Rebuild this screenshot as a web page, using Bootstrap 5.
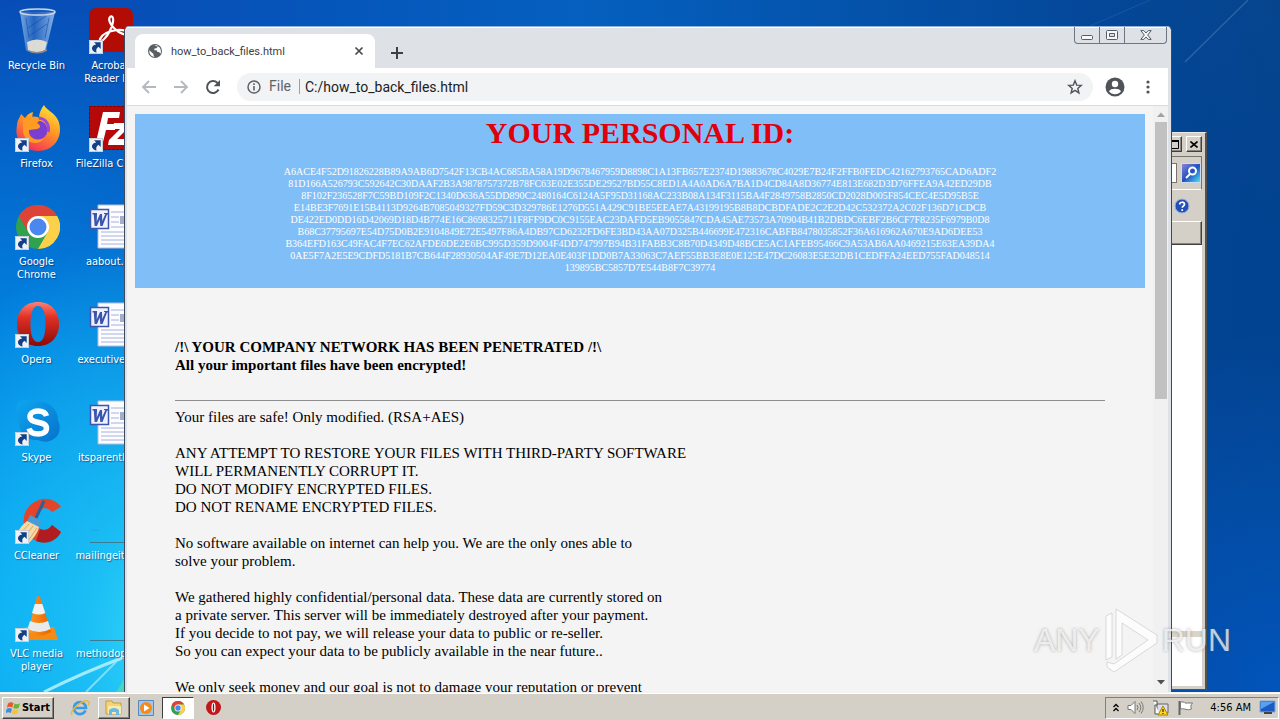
<!DOCTYPE html>
<html lang="en">
<head>
<meta charset="utf-8">
<meta name="viewport" content="width=device-width, initial-scale=1">
<title>how_to_back_files.html</title>
<link href="https://cdn.jsdelivr.net/npm/bootstrap@5.3.0/dist/css/bootstrap.min.css" rel="stylesheet">
<style>
  :root { --face: #d4d0c8; --ui: "DejaVu Sans Condensed", "Noto Sans", sans-serif; --tab: Roboto, "Noto Sans", sans-serif; }
  body { font-family: var(--ui); font-size: 11px; line-height: 13px; color: #000; }
  button { font-family: inherit; padding: 0; border: 0; background: none; color: inherit; }
  svg { display: block; flex: none; }
  .desktop {
    background:
      radial-gradient(ellipse 320px 420px at 190px 640px, #38dcfa 0%, rgba(30,196,246,.85) 35%, rgba(0,150,236,0) 100%),
      radial-gradient(ellipse 420px 640px at 0 620px, #00a4f4 0%, rgba(0,140,232,.85) 45%, rgba(0,90,200,0) 100%),
      radial-gradient(ellipse 300px 360px at 100% 100%, rgba(0,86,192,.9), rgba(0,80,180,0)),
      radial-gradient(ellipse 300px 420px at 100% 42%, rgba(0,66,146,.9), rgba(0,70,160,0)),
      linear-gradient(90deg, #0749b4 0%, #0560bf 45%, #04489a 85%, #08468c 100%);
    background-color: #0450ae;
  }
  .rays { inset: 0; width: 100%; height: 100%; }
  .icon-grid { display: grid; grid-template-columns: 73px 75px; grid-auto-rows: 98px; width: 148px; }
  .shortcut { color: #fff; text-decoration: none; padding-top: 6px; text-shadow: 1px 1px 1px rgba(0,30,90,.55); }
  .shortcut svg { margin-bottom: 5px; }
  /* windows */
  .explorer { top: 132px; right: 73px; bottom: 2px; width: 35%; background: var(--face); border: 1px solid #eceae6; border-right: 2px solid #55524c; border-bottom: 1px solid #55524c; padding: 3px 3px 3px 3px; }
  .cap { width: 16px; height: 16px; background: var(--face); }
  .raised { background: var(--face); border: 1px solid #fff; border-right-color: #404040; border-bottom-color: #404040; box-shadow: inset -1px -1px #88857e; }
  .sunken { border: 1px solid #808080; border-right-color: #fff; border-bottom-color: #fff; }
  .find-row { height: 34px; border: 1px solid #fff; border-right-color: #77746e; border-top-color: #77746e; }
  .find-row input { height: 20px; border: 1px solid #77746e; background: #fff; }
  .find-row button { width: 20px; height: 20px; background: linear-gradient(135deg,#8b86d8,#1f50c0 50%,#4fe0f4); border: 1px solid #cde; }
  .help-row { height: 31px; }
  .head-row { height: 24px; }
  .split-row { height: 6px; background: #d8d5c8; margin-bottom: 49px; }
  .browser { top: 26px; left: 124px; right: 108px; bottom: 0; background: #dee1e6; border: 1px solid #3b4a5e; border-top-color: #8fb0d8; border-bottom: 0; border-radius: 5px 5px 0 0; padding: 0 3px 0 2px; box-shadow: inset 0 1px #fff; }
  .tabbar { flex: none; height: 41px; padding: 7px 0 0 8px; }
  .tab { width: 240px; height: 34px; background: #fff; border-radius: 8px 8px 0 0; padding: 0 11px 0 12px; font-family: var(--tab); font-size: 11px; color: #3c4043; }
  .new-tab { margin: 3px 0 0 15px; }
  .winctl { top: 0; right: 4px; height: 17px; border: 1px solid #6d7583; border-top: 0; border-radius: 0 0 4px 4px; }
  .winctl button { width: 25px; border-right: 1px solid #6d7583; }
  .winctl button:last-child { width: 41px; border: 0; }
  .toolbar { flex: none; height: 38px; background: #fff; border-bottom: 1px solid #dadada; padding: 0 13px 0 14px; }
  .omnibox { height: 28px; background: #f1f3f4; border-radius: 14px; padding: 0 10px; font-family: var(--tab); font-size: 14px; color: #5f6368; }
  .omnibox input { border: 0; background: none; outline: 0; color: #202124; font-size: 14px; padding: 0; }
  .divider { width: 1px; height: 15px; background: #9aa0a6; margin: 0 5px 0 8px; }
  .viewport { min-height: 0; }
  .note { background: #f4f4f4; padding: 8px; font-family: "Liberation Serif", serif; font-size: 15px; line-height: 18px; overflow: hidden; }
  .idbox { background: #80bef8; color: #fff; padding-bottom: 14px; font-size: 10px; line-height: 12px; }
  .idbox h1 { font-size: 30px; line-height: 37px; font-weight: 700; color: #e0000c; margin-bottom: 15px; }
  .message { padding: 50px 40px 0; }
  .message hr { margin: 26px 0 7px; border-top: 1px solid #8e8e8e; opacity: 1; }
  .message p { margin: 0 0 18px; }
  .scroller { width: 15px; background: #f1f1f1; padding: 6px 1px 3px 2px; }
  .thumb { background: #c1c1c1; height: 48%; width: 12px; margin-top: 5px; }
  /* watermark */
  .mark-any { right: 49px; bottom: 18px; height: 68px; font-family: "Liberation Sans", sans-serif; font-size: 32px; line-height: 36px; color: rgba(255,255,255,.72); text-shadow: 0 0 3px rgba(90,90,90,.5); pointer-events: none; }
  /* taskbar */
  .taskbar { flex: none; height: 28px; background: var(--face); border-top: 1px solid #f3f2ef; padding: 3px 1px 1px 2px; box-shadow: inset 0 1px #fff; }
  .start { width: 52px; height: 22px; font-weight: 700; font-size: 11px; }
  .task { width: 32px; height: 22px; }
  .task.active { background: #fff; border: 1px solid #404040; border-right-color: #fff; border-bottom-color: #fff; }
  .tray { height: 22px; padding: 0 1px 0 7px; }
</style>
</head>
<body class="vh-100 d-flex flex-column overflow-hidden">

<svg width="0" height="0" class="position-absolute" aria-hidden="true">
  <defs>
    <linearGradient id="gOpera" x1="0" y1="0" x2="0" y2="1"><stop offset="0" stop-color="#ff8070"/><stop offset=".35" stop-color="#e03024"/><stop offset="1" stop-color="#8c0a08"/></linearGradient>
    <linearGradient id="gFox" x1=".8" y1="0" x2=".3" y2="1"><stop offset="0" stop-color="#ffe63c"/><stop offset=".45" stop-color="#ff9a24"/><stop offset="1" stop-color="#f42c58"/></linearGradient>
    <linearGradient id="gSkype" x1="0" y1="0" x2="1" y2="1"><stop offset="0" stop-color="#0da7f0"/><stop offset="1" stop-color="#0672cc"/></linearGradient>
    <linearGradient id="gBin" x1="0" x2="1"><stop offset="0" stop-color="#9cc4ee" stop-opacity=".75"/><stop offset=".4" stop-color="#2f6cc4" stop-opacity=".7"/><stop offset="1" stop-color="#a8ccf0" stop-opacity=".8"/></linearGradient>
    <linearGradient id="gCone" x1="0" x2="1"><stop offset="0" stop-color="#ff9820"/><stop offset="1" stop-color="#e86400"/></linearGradient>
    <symbol id="link" viewBox="0 0 14 14"><path d="M0 0h14v14H0z" fill="#eef1f5"/><path d="M.5.5h13v13H.5z" fill="none" stroke="#c9cdd4"/><path d="M5 2.300h6.700V9L9.500 6.800C7.200 8.300 6.800 10 7.600 12.500 4 11.800 2.200 9.200 3.300 7 4 5.500 5.500 4.900 7.300 4.600z" fill="#123f86"/></symbol>
    <symbol id="chrome" viewBox="0 0 44 44">
      <circle cx="22" cy="22" r="22" fill="#2fa14f"/>
      <path d="M2.900 11A22 22 0 0 1 41.100 11H22l-9.500 16.500z" fill="#dc4437"/>
      <path d="M41.100 11A22 22 0 0 1 22 44l9.500-16.500L22 11z" fill="#fdd04a"/>
      <circle cx="22" cy="22" r="11" fill="#fff"/><circle cx="22" cy="22" r="8.500" fill="#4a87ee"/>
    </symbol>
    <symbol id="opera" viewBox="0 0 44 46"><path fill-rule="evenodd" d="M22 1C9 1 1 10 1 23s8 22 21 22 21-9 21-22S35 1 22 1zm0 4c5.500 0 7.500 8 7.500 18S27.500 41 22 41s-7.500-8-7.500-18S16.500 5 22 5z" fill="url(#gOpera)"/></symbol>
    <symbol id="word" viewBox="0 0 48 48">
      <path d="M11 3h37v43H11z" fill="#fdfdff" stroke="#b4bbe0"/>
      <path d="M24 10h22M24 15h8M24 20h8M24 25h22M14 30h32M14 34h32M14 38h32M14 42h32" stroke="#a4b0dc"/><path d="M33 14h13v8H33z" fill="#a4aecb"/>
      <path d="M3.500 7.500h18v19h-18z" fill="#eef2ff" stroke="#3c56ae" stroke-width="1.500"/>
      <path d="M5.500 11h4.500v1.500l-.3 7 3.300-7.500h2l.3 7 3-7h-1.300V11h4v1.500h-1L15.500 24h-2.200l-.6-6.500L10 24H7.600l-.8-11.500H5.500z" fill="#3b54ac"/>
    </symbol>
  </defs>
</svg>

<main class="desktop position-relative flex-grow-1 overflow-hidden">
  <svg class="rays position-absolute" viewBox="0 0 1280 692" preserveAspectRatio="none" aria-hidden="true">
    <path d="M1248 0L1185 62" stroke="#3f78b8" stroke-width="1.500" opacity=".6"/><path d="M1150 0L1090 26" stroke="#2a66b4" opacity=".5"/>
    <path d="M44 692Q84 672 125 657" stroke="#b8f2ff" stroke-width="3" fill="none" opacity=".85"/>
    <path d="M86 692Q106 672 116 662" stroke="#a0ecff" stroke-width="2" fill="none" opacity=".7"/>
    <path d="M116 692Q122 684 125 676V692z" fill="#5be2a0" opacity=".6"/>
  </svg>

  <nav class="icon-grid position-relative text-center" aria-label="Desktop">
    <a href="#" class="shortcut d-flex flex-column align-items-center">
      <svg width="48" height="48" viewBox="0 0 48 48"><path d="M7 6l6 38q11 6 20 0l9-38z" fill="url(#gBin)"/><path d="M14 36q10-5 20 0l-2 8q-9 5-17 0z" fill="#e6e0d6" opacity=".95"/><path d="M13 12l3 20M36 12l-4 20M15 22l18-12M16 30l18-12" stroke="#1546a0" opacity=".55" fill="none"/><ellipse cx="24.500" cy="6" rx="17.500" ry="3" fill="#2a62b8" fill-opacity=".5" stroke="#c8d8ea" stroke-width="1.500"/><path d="M13 43q11 6 21 0v2q-10 5-20 0z" fill="#87898e"/></svg>
      <span>Recycle Bin</span></a>
    <a href="#" class="shortcut d-flex flex-column align-items-center">
      <svg width="48" height="48" viewBox="0 0 48 48"><rect x="2" y="2" width="44" height="44" rx="7" fill="#b30c05"/><path d="M13 33c2-5 9-8 17-9 6-.6 11 1 10 3-1 3-8 0-12-4-5-4-7-10-5-12s4 1 3 5c-1 6-5 13-8 16-2 3-6 4-5 1z" fill="none" stroke="#fff" stroke-width="2.200"/><use href="#link" x="2" y="34" width="14" height="14"/></svg>
      <span>Acrobat<br>Reader DC</span></a>
    <a href="#" class="shortcut d-flex flex-column align-items-center">
      <svg width="48" height="48" viewBox="0 0 48 48"><path d="M31 1c2 5 10 7 14 15 6 14-2 31-20 31C10 47 1 36 4 21c.5-6 3-7 4-11l4 4c2-3 4-5 8-6l-1 6c3-2 5-1 7 0 0-5 2-9 5-13z" fill="url(#gFox)"/><circle cx="25" cy="26" r="9.500" fill="#7a3fd0"/><path d="M10 16c4-4 11-5 18-1l-4 4c4 2 4 5 0 6l-8 1c-1 9 8 12 15 8-7 10-20 4-21-7z" fill="#ff9b22"/><path d="M26 14c7 1 11 7 9 14" stroke="#9a48e0" stroke-width="3" fill="none"/><use href="#link" x="2" y="34" width="14" height="14"/></svg>
      <span>Firefox</span></a>
    <a href="#" class="shortcut d-flex flex-column align-items-center">
      <svg width="48" height="48" viewBox="0 0 48 48"><path d="M2 2h44v44H2z" fill="#b50808"/><path d="M2.500 2.500h43v43h-43z" fill="none" stroke="#700" stroke-dasharray="2 2"/><path d="M16 8h17l-1 6H21l-1 6h9l-1 6h-9l-3 12H9zM27 19h15l-1 5-11 11h10l-1 6H21l1-5 11-11h-7z" fill="#fff"/><use href="#link" x="2" y="34" width="14" height="14"/></svg>
      <span class="text-nowrap">FileZilla Client</span></a>
    <a href="#" class="shortcut d-flex flex-column align-items-center">
      <svg width="48" height="48" viewBox="0 0 48 48"><use href="#chrome" x="3" y="3" width="44" height="44"/><use href="#link" x="2" y="34" width="14" height="14"/></svg>
      <span>Google<br>Chrome</span></a>
    <a href="#" class="shortcut d-flex flex-column align-items-center">
      <svg width="48" height="48"><use href="#word" width="48" height="48"/></svg><span>aabout.rtf</span></a>
    <a href="#" class="shortcut d-flex flex-column align-items-center">
      <svg width="48" height="48" viewBox="0 0 48 48"><use href="#opera" x="3" y="1" width="44" height="46"/><use href="#link" x="2" y="34" width="14" height="14"/></svg>
      <span>Opera</span></a>
    <a href="#" class="shortcut d-flex flex-column align-items-center">
      <svg width="48" height="48"><use href="#word" width="48" height="48"/></svg><span>executivet.rtf</span></a>
    <a href="#" class="shortcut d-flex flex-column align-items-center">
      <svg width="48" height="48" viewBox="0 0 48 48"><path d="M5 5q7-6 16-2c13-1 24 7 24 19 3 7 2 14-3 18-6 5-12 4-17 2C12 43 5 34 6 22 3 16 2 10 5 5z" fill="url(#gSkype)"/><path d="M33.500 18C32.500 14.500 29 13 25 13c-5 0-8 2.500-8 5.500 0 4.500 4.500 5 9 6 4.500 1 7.500 2 7.500 5.800 0 4-4 5.700-8.500 5.700-5 0-8-2-9-5.500" fill="none" stroke="#fff" stroke-width="5.500"/><use href="#link" x="2" y="34" width="14" height="14"/></svg>
      <span>Skype</span></a>
    <a href="#" class="shortcut d-flex flex-column align-items-center">
      <svg width="48" height="48"><use href="#word" width="48" height="48"/></svg><span>itsparenth.rtf</span></a>
    <a href="#" class="shortcut d-flex flex-column align-items-center">
      <svg width="48" height="48" viewBox="0 0 48 48"><path d="M48 11C43 4 34 1 26 4 13 8 8 21 12 33c4 11 15 15 25 12 5-2 9-5 11-9l-9-7c-3 5-9 6-13 3-6-5-5-14 1-18 4-3 9-2 12 2z" fill="#e2452a"/><path d="M48 36l-9-7c-3 5-8 6-12 4l-4 12c9 4 20 1 25-9z" fill="#b01c20"/><path d="M31 5l-9 19" stroke="#2c5f9c" stroke-width="3"/><path d="M17 19l12 6-3 7-12-6z" fill="#4a9cd4"/><path d="M14 25l12 6c-1 5-5 11-10 16L4 37c3-5 6-9 10-12z" fill="#f6d9a4"/><path d="M16 28L7 38m13-8l-9 12m13-10l-9 13" stroke="#d6a868"/><use href="#link" x="2" y="34" width="14" height="14"/></svg>
      <span>CCleaner</span></a>
    <a href="#" class="shortcut d-flex flex-column align-items-center">
      <svg width="48" height="48"><path d="M3 46.500h45" stroke="#3a7c94"/><path d="M4 34h8" stroke="#2aa4da"/></svg><span>mailingeith.rtf</span></a>
    <a href="#" class="shortcut d-flex flex-column align-items-center">
      <svg width="48" height="48" viewBox="0 0 48 48"><path d="M12 33h29l4 13H8z" fill="#f58a14"/><path d="M24 3q2-2 3 0l11 35q-12 7-23 0z" fill="url(#gCone)"/><path d="M21.800 10h7.500l3 9q-6 3-13.300 0z" fill="#f0f1f2"/><path d="M17 27q9 4 18 0l2.500 8q-11 6-23 0z" fill="#e8eaec"/><use href="#link" x="2" y="34" width="14" height="14"/></svg>
      <span>VLC media<br>player</span></a>
    <a href="#" class="shortcut d-flex flex-column align-items-center">
      <svg width="48" height="48"><path d="M3 46.500h45" stroke="#3a7c94"/></svg><span>methodopt.rtf</span></a>
  </nav>

  <section class="explorer position-absolute d-flex flex-column" aria-label="Explorer">
    <div class="d-flex justify-content-end gap-1 pb-1">
      <button class="cap raised d-flex align-items-center justify-content-center" aria-label="Maximize"><svg width="9" height="9"><path d="M.5 1h8v7.500h-8z" fill="none" stroke="#000"/><path d="M0 1h9" stroke="#000" stroke-width="2"/></svg></button>
      <button class="cap raised d-flex align-items-center justify-content-center" aria-label="Close"><svg width="8" height="7"><path d="M.5.500l7 6M7.500.500l-7 6" stroke="#000" stroke-width="1.600"/></svg></button>
    </div>
    <div class="find-row d-flex align-items-center gap-1">
      <input type="text" class="flex-grow-1" aria-label="Search">
      <button aria-label="Search"><svg width="18" height="18"><circle cx="10.500" cy="7" r="3.500" fill="none" stroke="#fff" stroke-width="2"/><path d="M8 10l-4 4" stroke="#fff" stroke-width="2"/></svg></button>
    </div>
    <div class="help-row d-flex align-items-center justify-content-end px-2">
      <svg class="me-1" width="16" height="16"><circle cx="8" cy="8" r="7" fill="#2350b4" stroke="#9cb4e4"/><path d="M5.700 6.500c0-3 4.800-3 4.800-.2C10.500 8 8.200 8 8.200 9.800M8.200 11.300v1.700" stroke="#fff" stroke-width="1.700" fill="none"/></svg>
    </div>
    <div class="head-row raised"></div>
    <div class="flex-grow-1 bg-white"></div>
    <div class="bg-white"><div class="split-row"></div></div>
  </section>

  <section class="browser position-absolute d-flex flex-column" aria-label="Browser">
    <div class="winctl position-absolute d-flex">
      <button class="d-flex align-items-center justify-content-center" aria-label="Minimize"><svg width="12" height="12"><rect x=".5" y="6.500" width="11" height="4" rx="1" fill="#f6f7f8" stroke="#555c68"/></svg></button>
      <button class="d-flex align-items-center justify-content-center" aria-label="Maximize"><svg width="12" height="10"><rect x=".5" y=".5" width="11" height="9" rx="1" fill="#f6f7f8" stroke="#555c68"/><path d="M3.500 3.500h5v3h-5z" fill="#dee1e6" stroke="#555c68"/></svg></button>
      <button class="d-flex align-items-center justify-content-center" aria-label="Close"><svg width="12" height="10"><path d="M.8.600h3L6 3l2.200-2.400h3L7.700 5l3.500 4.400h-3L6 7 3.800 9.400h-3L4.300 5z" fill="#f6f7f8" stroke="#555c68"/></svg></button>
    </div>
    <div class="tabbar d-flex">
      <div class="tab d-flex align-items-center">
        <svg class="me-2" width="16" height="16"><circle cx="8" cy="8" r="7" fill="#5a5e63"/><path d="M2.300 7.200L6.500 11v1.200l1 1.600C4.500 13.800 2 11 2.300 7.200zM7 2.400l3.500-.2.300 1.500-1.500 1.500-1.800.3-.3 1.700H9.500l1 1.800h1.400l1.700 1.800c.8-2.600.1-5.300-1.600-7" fill="#fff"/></svg>
        <span>how_to_back_files.html</span>
        <button class="ms-auto" aria-label="Close tab"><svg width="10" height="10"><path d="M1.500 1.500l7 7M8.500 1.500l-7 7" stroke="#45494d" stroke-width="1.700"/></svg></button>
      </div>
      <button class="new-tab" aria-label="New tab"><svg width="14" height="14"><path d="M7 1v12M1 7h12" stroke="#3c4043" stroke-width="2"/></svg></button>
    </div>
    <div class="toolbar d-flex align-items-center">
      <button aria-label="Back"><svg width="16" height="16"><path d="M15 8H2.500M8 2L2 8l6 6" fill="none" stroke="#b5b8bc" stroke-width="1.800"/></svg></button>
      <button class="mx-3" aria-label="Forward"><svg width="16" height="16"><path d="M1 8h12.500M8 2l6 6-6 6" fill="none" stroke="#b5b8bc" stroke-width="1.800"/></svg></button>
      <button class="me-3" aria-label="Reload"><svg width="16" height="16"><path d="M13.500 10.500A6 6 0 1 1 12.300 3.800L14 5.600" fill="none" stroke="#505458" stroke-width="2"/><path d="M15 1v6.300H8.700z" fill="#505458"/></svg></button>
      <div class="omnibox flex-grow-1 d-flex align-items-center">
        <svg class="me-2" width="14" height="14"><circle cx="7" cy="7" r="6" fill="none" stroke="#5f6368" stroke-width="1.500"/><path d="M7 6v4.500M7 3.300v1.600" stroke="#5f6368" stroke-width="1.600"/></svg>
        <label for="address">File</label><span class="divider"></span>
        <input id="address" type="text" class="flex-grow-1" value="C:/how_to_back_files.html">
        <button aria-label="Bookmark"><svg width="16" height="16"><path d="M8 1.800l1.700 4.300 4.600.3-3.500 3 1.100 4.500L8 11.400l-3.900 2.500 1.100-4.500-3.500-3 4.600-.3z" fill="none" stroke="#505458" stroke-width="1.400"/></svg></button>
      </div>
      <button class="ms-2 me-3 ps-1" aria-label="Profile"><svg width="20" height="20"><circle cx="10" cy="10" r="9.500" fill="#505458"/><circle cx="10" cy="7" r="3.200" fill="#fff"/><path d="M4 14.300c1.500-3.300 10.500-3.300 12 0A7.400 7.400 0 0 1 4 14.300z" fill="#fff"/></svg></button>
      <button aria-label="Menu"><svg width="14" height="14"><g fill="#505458"><circle cx="7" cy="2" r="1.600"/><circle cx="7" cy="7" r="1.600"/><circle cx="7" cy="12" r="1.600"/></g></svg></button>
    </div>
    <div class="viewport d-flex flex-grow-1">
      <article class="note flex-grow-1">
        <div class="idbox text-center">
          <h1>YOUR PERSONAL ID:</h1>
          A6ACE4F52D91826228B89A9AB6D7542F13CB4AC685BA58A19D9678467959D8898C1A13FB657E2374D19883678C4029E7B24F2FFB0FEDC42162793765CAD6ADF2<br>
          81D166A526793C592642C30DAAF2B3A9878757372B78FC63E02E355DE29527BD55C8ED1A4A0AD6A7BA1D4CD84A8D36774E813E682D3D76FFEA9A42ED29DB<br>
          8F102F236528F7C59BD109F2C1340D636A55DD890C2480164C6124A5F95D31168AC233B08A134F3115BA4F2849758B2850CD2028D005F854CEC4E5D95B5E<br>
          E14BE3F7691E15B4113D9264B7085049327FD59C3D329786E1276D551A429C91BE5EEAE7A43199195B8B8DCBDFADE2C2E2D42C532372A2C02F136D71CDCB<br>
          DE422ED0DD16D42069D18D4B774E16C8698325711F8FF9DC0C9155EAC23DAFD5EB9055847CDA45AE73573A70904B41B2DBDC6EBF2B6CF7F8235F6979B0D8<br>
          B68C37795697E54D75D0B2E9104849E72E5497F86A4DB97CD6232FD6FE3BD43AA07D325B446699E472316CABFB8478035852F36A616962A670E9AD6DEE53<br>
          B364EFD163C49FAC4F7EC62AFDE6DE2E6BC995D359D9004F4DD747997B94B31FABB3C8B70D4349D48BCE5AC1AFEB95466C9A53AB6AA0469215E63EA39DA4<br>
          0AE5F7A2E5E9CDFD5181B7CB644F28930504AF49E7D12EA0E403F1DD0B7A33063C7AEF55BB3E8E0E125E47DC26083E5E32DB1CEDFFA24EED755FAD048514<br>
          139895BC5857D7E544B8F7C39774
        </div>
        <div class="message">
          <strong>/!\ YOUR COMPANY NETWORK HAS BEEN PENETRATED /!\<br>All your important files have been encrypted!</strong>
          <hr>
          <p>Your files are safe! Only modified. (RSA+AES)</p>
          <p>ANY ATTEMPT TO RESTORE YOUR FILES WITH THIRD-PARTY SOFTWARE<br>WILL PERMANENTLY CORRUPT IT.<br>DO NOT MODIFY ENCRYPTED FILES.<br>DO NOT RENAME ENCRYPTED FILES.</p>
          <p>No software available on internet can help you. We are the only ones able to<br>solve your problem.</p>
          <p>We gathered highly confidential/personal data. These data are currently stored on<br>a private server. This server will be immediately destroyed after your payment.<br>If you decide to not pay, we will release your data to public or re-seller.<br>So you can expect your data to be publicly available in the near future..</p>
          <p>We only seek money and our goal is not to damage your reputation or prevent</p>
        </div>
      </article>
      <div class="scroller d-flex flex-column align-items-center">
        <svg width="8" height="5"><path d="M0 5l4-4.500L8 5z" fill="#a3a3a3"/></svg>
        <div class="thumb"></div>
        <svg class="mt-auto mb-1" width="8" height="5"><path d="M0 0h8L4 4.500z" fill="#505050"/></svg>
      </div>
    </div>
  </section>

  <div class="mark-any position-absolute d-flex align-items-center">
    <span>ANY</span>
    <svg width="62" height="68" viewBox="-2 0 62 68"><path d="M4 10l6-3v44l-6 3zM14 3l41 26v8L12 66l-7-5V56l7 2 34-24L20 17v32l-6 4z" fill="#fff" fill-opacity=".7" stroke="#888" stroke-opacity=".28"/></svg>
    <span>RUN</span>
  </div>
</main>

<footer class="taskbar d-flex align-items-center">
  <button class="start raised d-flex align-items-center justify-content-center">
    <svg width="16" height="16"><path d="M2 3.500c2-1.500 3.500-1.500 5.500-.5L6.300 7.500c-2-1-3.500-1-5.500.3z" fill="#e85a22"/><path d="M8.500 3.500c2 1 3.500 1 5.500-.3l-1.200 4.600c-2 1.200-3.500 1.200-5.500.2z" fill="#6cb33e"/><path d="M.6 9c2-1.300 3.500-1.300 5.400-.3L4.800 13c-2-1-3.400-1-5.300.3z" fill="#3f8ce0"/><path d="M7 9.200c2 1 3.500 1 5.500-.2L11.300 13.500c-2 1.200-3.500 1-5.500.2z" fill="#fcc12c"/></svg>
    <span>Start</span>
  </button>
  <button class="ms-3" aria-label="Internet Explorer"><svg width="20" height="18"><path d="M15.500 11.500A6 6 0 1 1 16 9H5" fill="none" stroke="#3a9be4" stroke-width="2.600"/><path d="M2 16C-1 12 14-1 18.500 2.500c1 1 .5 2.500-.5 4" fill="none" stroke="#e8b93c" stroke-width="1.500"/></svg></button>
  <button class="task raised d-flex align-items-center justify-content-center ms-2" aria-label="Explorer"><svg width="18" height="17"><path d="M1 2h6l1 2h8v11H1z" fill="#f4d476" stroke="#c59d3a"/><path d="M3 7h13v8H3z" fill="#fbeaa8"/><path d="M4 16V11q5-4 10 0v5h-3v-3H7v3z" fill="#69b9ea"/></svg></button>
  <button class="ms-2" aria-label="Media Player"><svg width="16" height="16"><path d="M.5.500h15v15H.5z" fill="#9fc8ee" stroke="#5886c0"/><circle cx="8" cy="8" r="6" fill="#f48a18"/><path d="M6 4.500l5.500 3.500L6 11.500z" fill="#fff"/></svg></button>
  <button class="task active d-flex align-items-center justify-content-center ms-2 me-1" aria-label="Chrome"><svg width="14" height="14"><use href="#chrome" width="14" height="14"/></svg></button>
  <button class="ms-2" aria-label="Opera"><svg width="15" height="15"><circle cx="7.500" cy="7.500" r="7.500" fill="#c0181a"/><ellipse cx="7.500" cy="7.500" rx="2" ry="5" fill="#fff"/><ellipse cx="7.500" cy="7.500" rx=".7" ry="4" fill="#a00c10"/></svg></button>
  <div class="tray sunken d-flex align-items-center ms-auto">
    <button class="me-2" aria-label="Show hidden icons"><svg width="6" height="9"><path d="M.5 4L3 1.500 5.500 4M.5 8L3 5.500 5.500 8" fill="none" stroke="#000" stroke-width="1.300"/></svg></button>
    <svg class="me-2" width="17" height="15"><path d="M1 5.500h3l4-4v12l-4-4H1z" fill="#fff" stroke="#777"/><path d="M10 5q2 2.500 0 5M12 3q3.500 4.500 0 9M14 1.500q4.500 6 0 12" fill="none" stroke="#777"/></svg>
    <svg class="me-2" width="17" height="16"><path d="M5 4h11v9H5z" fill="#dde" stroke="#666"/><path d="M1 1h4v4H3v9h5" fill="#fff" stroke="#555"/><path d="M11 6l5 9H6z" fill="#ffd62e" stroke="#a88400"/><path d="M11 9v3M11 13v1" stroke="#000"/></svg>
    <svg class="me-3" width="17" height="16"><path d="M2.500 1v14" stroke="#666" stroke-width="2"/><path d="M3.500 2c4-1 4 2 7 1h5c-2 2-2 4-1 6-5 2-6-1-11 0z" fill="#fff" stroke="#777"/></svg>
    <span class="me-2">4:56 AM</span>
    <svg width="18" height="15"><path d="M1 1h15v11H1z" fill="#1b5cc4" stroke="#7ea8dc"/><path d="M2 2h13L2 9z" fill="#5aa0f0"/><path d="M5 13h8" stroke="#444" stroke-width="2"/></svg>
  </div>
</footer>

<script src="https://cdn.jsdelivr.net/npm/bootstrap@5.3.0/dist/js/bootstrap.bundle.min.js"></script>
</body>
</html>
